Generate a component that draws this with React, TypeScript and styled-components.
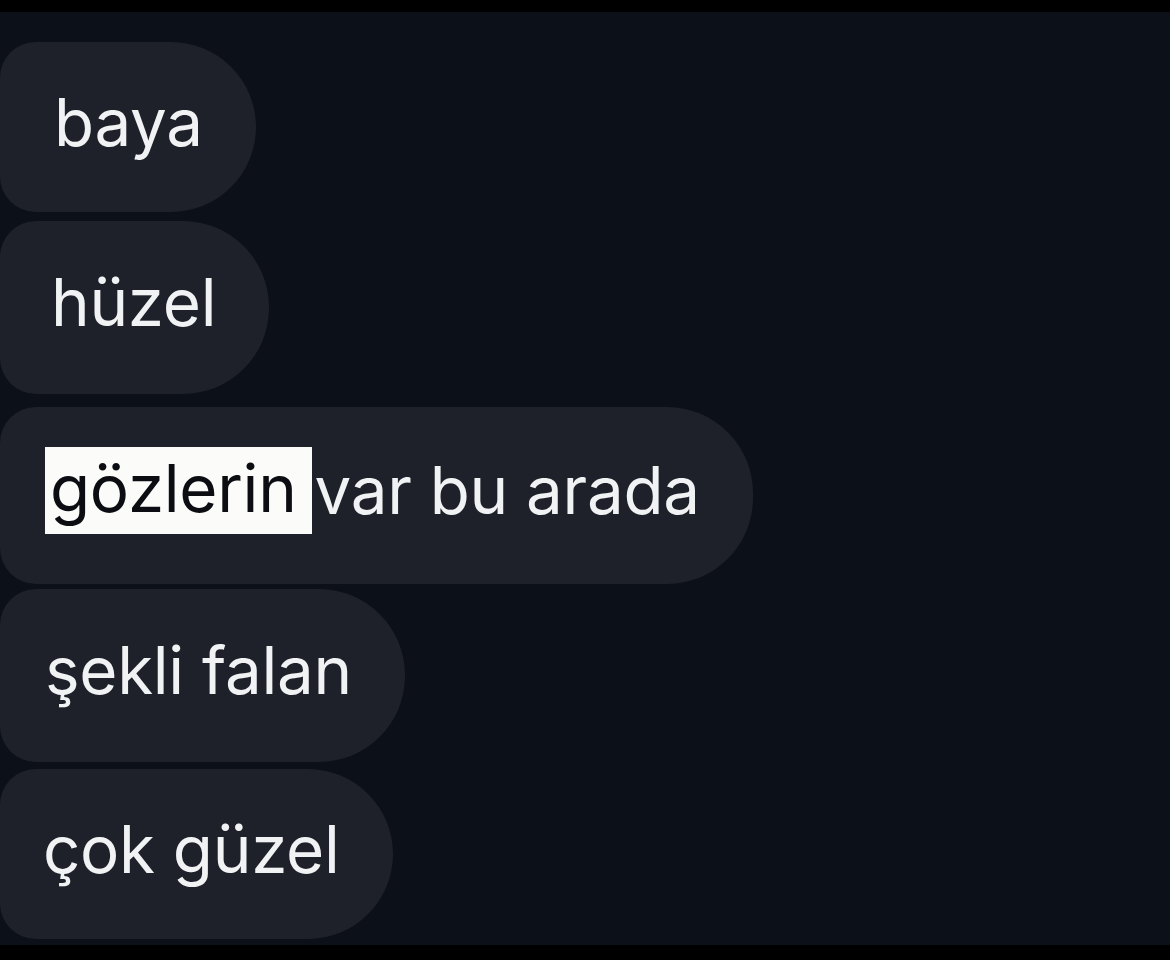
import React from "react";
import styled, { createGlobalStyle } from "styled-components";

const Global = createGlobalStyle`
  html, body { margin: 0; padding: 0; background: #000; }
  body { font-family: Inter, "Liberation Sans", sans-serif; }
`;

const Screen = styled.div`
  width: 1170px;
  height: 960px;
  background: #000;
  display: flex;
  flex-direction: column;
  padding: 12px 0 15px;
  box-sizing: border-box;
  overflow: hidden;
`;

const Chat = styled.div`
  flex: 1;
  background: #0b1019;
  display: flex;
  flex-direction: column;
  align-items: flex-start;
  gap: 9px;
  padding-top: 30px;
`;

const Bubble = styled.div<{ $h: number; $pl: number; $mt?: number }>`
  height: ${(p) => p.$h}px;
  margin-top: ${(p) => p.$mt ?? 0}px;
  box-sizing: border-box;
  background: #1e2129;
  border-radius: 36px 86px 86px 36px;
  display: flex;
  align-items: center;
  padding: 0 53px 10px ${(p) => p.$pl}px;
  color: #f1f2f4;
  font-size: 65.5px;
  letter-spacing: -0.3px;
  white-space: nowrap;
`;

const Mark = styled.span`
  background: #fbfbf9;
  color: #0b0d12;
  padding: 2px 15px 6px 5px;
  margin-left: -5px;
  margin-right: 3px;
`;

const messages: { text: React.ReactNode; h: number; pl: number; mt?: number }[] = [
  { text: "baya", h: 170, pl: 54 },
  { text: "hüzel", h: 173, pl: 51 },
  {
    text: (
      <>
        <Mark>gözlerin</Mark>var bu arada
      </>
    ),
    h: 177,
    pl: 50,
    mt: 4,
  },
  { text: "şekli falan", h: 173, pl: 45, mt: -4 },
  { text: "çok güzel", h: 170, pl: 43, mt: -2 },
];

export default function App() {
  return (
    <>
      <Global />
      <Screen>
        <Chat>
          {messages.map((m, i) => (
            <Bubble key={i} $h={m.h} $pl={m.pl} $mt={m.mt}>
              {m.text}
            </Bubble>
          ))}
        </Chat>
      </Screen>
    </>
  );
}
